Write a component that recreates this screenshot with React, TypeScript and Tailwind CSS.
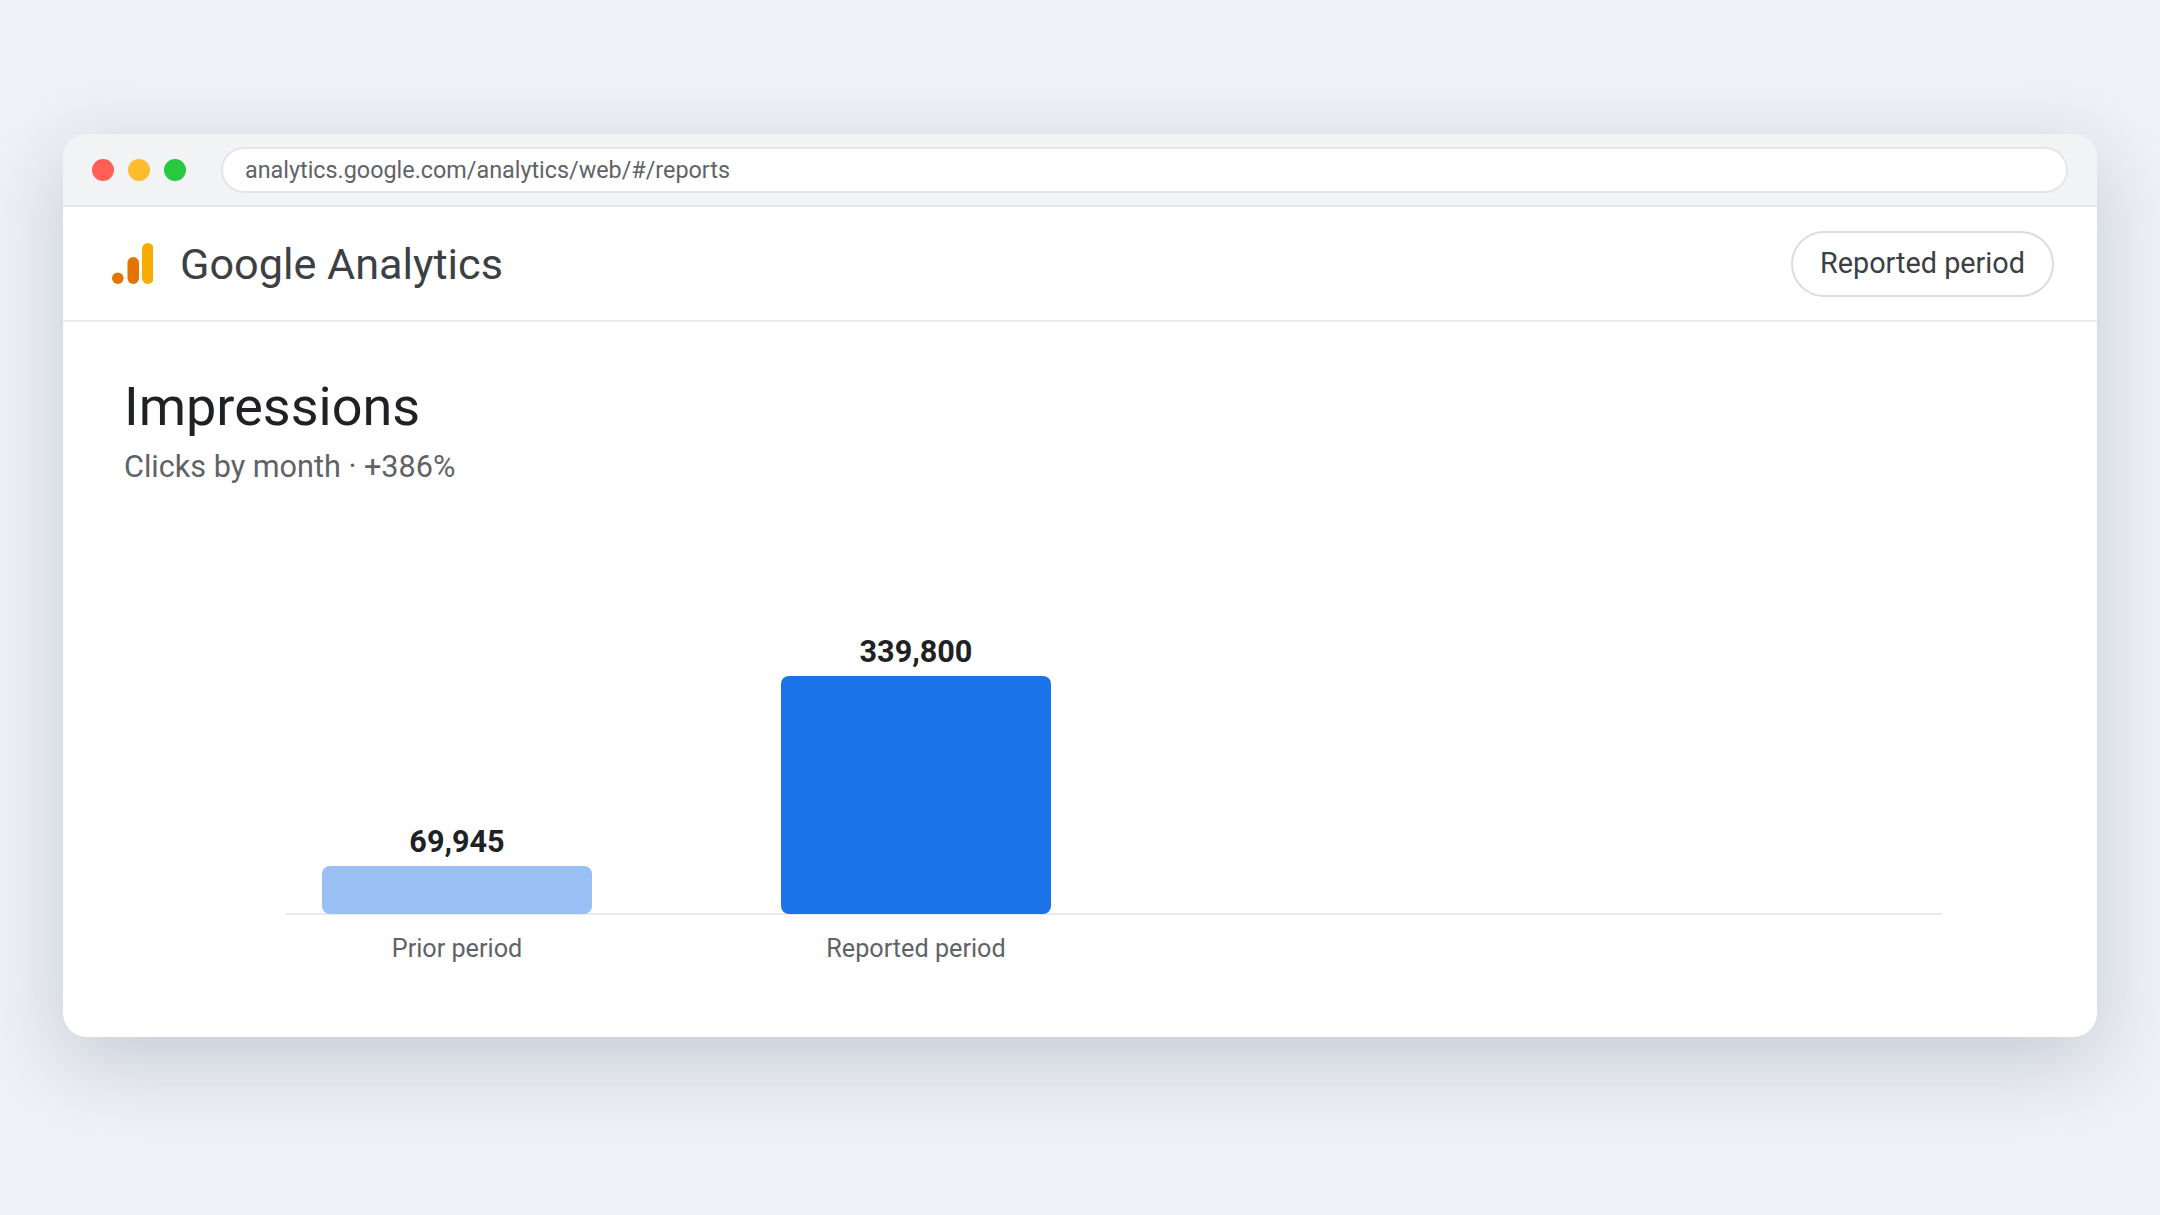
const font = "font-['Roboto',sans-serif]";

function AnalyticsLogo() {
  return (
    <svg width="41" height="41" viewBox="0 0 41 41" className="shrink-0">
      <rect x="30" y="0" width="11.5" height="41" rx="5.75" fill="#f9ab00" />
      <rect x="15.5" y="14" width="11.5" height="27" rx="5.75" fill="#e37400" />
      <circle cx="5.8" cy="35.2" r="5.8" fill="#e37400" />
    </svg>
  );
}

function BarColumn({
  value,
  barClass,
}: {
  value: string;
  barClass: string;
}) {
  return (
    <div className="flex w-[270px] flex-col items-center">
      <span className="mb-[6px] text-[30.6px] leading-[36px] font-bold text-[#202124]">{value}</span>
      <div className={`-mb-px w-full rounded-[8px] ${barClass}`} />
    </div>
  );
}

export default function App() {
  return (
    <div className={`min-h-screen bg-[#eef1f6] pt-[134px] ${font}`}>
      <div className="mx-auto h-[903px] w-[2034px] overflow-hidden rounded-[24px] bg-white shadow-[0_24px_80px_rgba(40,50,80,0.2)]">
        {/* browser chrome */}
        <div className="flex h-[73px] items-center border-b-2 border-[#e3e5ea] bg-[#f1f3f4] pr-[29px] pl-[29px]">
          <div className="flex gap-[14px]">
            <span className="h-[22px] w-[22px] rounded-full bg-[#ff5f57]" />
            <span className="h-[22px] w-[22px] rounded-full bg-[#febc2e]" />
            <span className="h-[22px] w-[22px] rounded-full bg-[#28c840]" />
          </div>
          <div className="ml-[35px] flex h-[46px] flex-1 items-center rounded-full border-2 border-[#e3e5ea] bg-white px-[22px] pt-[2px] text-[23.35px] text-[#5f6368]">
            analytics.google.com/analytics/web/#/reports
          </div>
        </div>

        {/* app header */}
        <div className="flex h-[115px] items-center justify-between border-b-2 border-[#e8eaed] pr-[43px] pl-[49px]">
          <div className="flex items-center gap-[27px]">
            <AnalyticsLogo />
            <span className="pt-[4px] text-[43.2px] text-[#3c4043]">Google Analytics</span>
          </div>
          <button className="h-[66px] rounded-full border-2 border-[#dadce0] bg-white px-[27px] text-[28.8px] text-[#3c4043]">
            Reported period
          </button>
        </div>

        {/* report body */}
        <div className="pt-[52px] pl-[61px]">
          <h1 className="text-[54px] leading-[66px] font-normal text-[#202124]">Impressions</h1>
          <p className="mt-[7px] text-[30.6px] leading-[40px] text-[#5f6368]">Clicks by month · +386%</p>

          <div className="mt-[170px] ml-[162px] w-[1656px]">
            <div className="flex h-[258px] items-end gap-[189px] border-b-2 border-[#e8eaed] pl-[36px]">
              <BarColumn value="69,945" barClass="h-[48px] bg-[#9abff5]" />
              <BarColumn value="339,800" barClass="h-[238px] bg-[#1a73e8]" />
            </div>
            <div className="mt-[16px] flex gap-[189px] pl-[36px] text-[25.2px] leading-[36px] text-[#5f6368]">
              <span className="w-[270px] text-center">Prior period</span>
              <span className="w-[270px] text-center">Reported period</span>
            </div>
          </div>
        </div>
      </div>
    </div>
  );
}
